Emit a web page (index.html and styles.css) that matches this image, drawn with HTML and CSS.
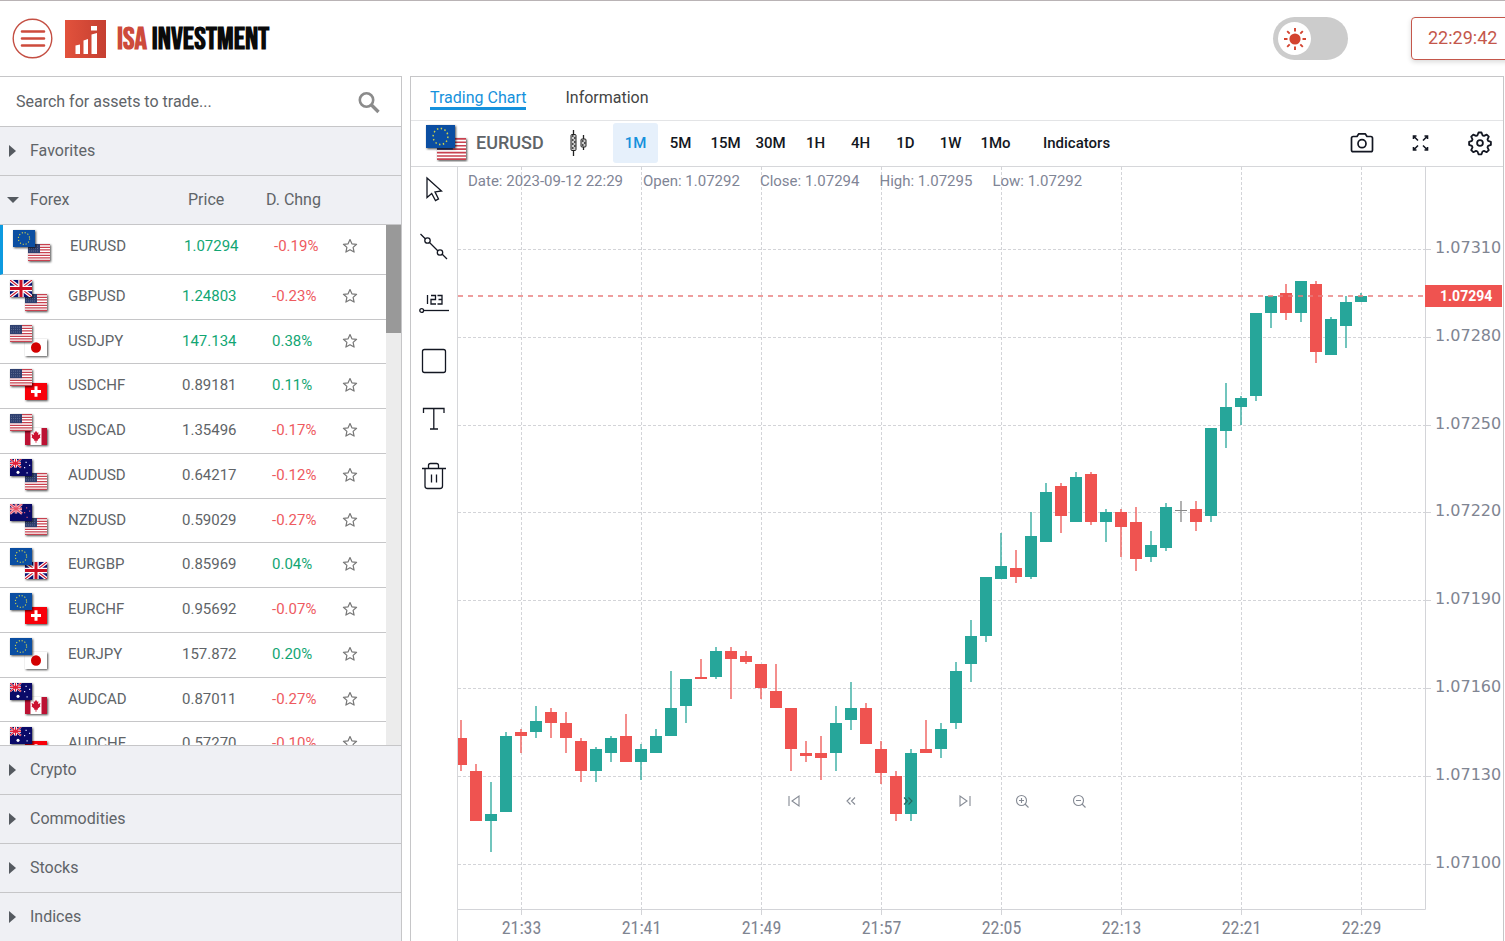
FILE: index.html
```html
<!DOCTYPE html>
<html lang="en">
<head>
<meta charset="utf-8">
<meta name="viewport" content="width=device-width, initial-scale=1">
<title>ISA Investment</title>
<link rel="stylesheet" href="styles.css">
</head>
<body>
<svg class="defs" aria-hidden="true">
  <defs>
    <symbol id="us" viewBox="0 0 22 16" preserveAspectRatio="none">
      <rect width="22" height="16" fill="#fff"/>
      <path d="M0 .6h22M0 3.1h22M0 5.6h22M0 8.1h22M0 10.6h22M0 13.1h22M0 15.4h22" stroke="#c8414f" stroke-width="1.2"/>
      <rect width="12" height="8.6" fill="#2f406f"/>
      <path d="M1 2h10M1 4.3h10M1 6.6h10" stroke="#6f7ca0" stroke-width=".7" stroke-dasharray="1 1"/>
    </symbol>
    <symbol id="eu" viewBox="0 0 22 16" preserveAspectRatio="none">
      <rect width="22" height="16" fill="#0b4ea2"/>
      <circle cx="11" cy="8" r="5.6" fill="none" stroke="#cfd24a" stroke-width="1.1" stroke-dasharray="1.1 1.83"/>
    </symbol>
    <symbol id="gb" viewBox="0 0 22 16" preserveAspectRatio="none">
      <rect width="22" height="16" fill="#0a1172"/>
      <path d="M0 0l22 16M22 0L0 16" stroke="#fff" stroke-width="3.4"/>
      <path d="M0 0l22 16M22 0L0 16" stroke="#d0142c" stroke-width="1.1"/>
      <path d="M11 0v16M0 8h22" stroke="#fff" stroke-width="5.4"/>
      <path d="M11 0v16M0 8h22" stroke="#cc1024" stroke-width="3"/>
    </symbol>
    <symbol id="jp" viewBox="0 0 22 16" preserveAspectRatio="none">
      <rect width="22" height="16" fill="#fff"/><circle cx="11" cy="8" r="5" fill="#d30000"/>
    </symbol>
    <symbol id="ch" viewBox="0 0 22 16" preserveAspectRatio="none">
      <rect width="22" height="16" fill="#f80009"/><path d="M11 3v10M6 8h10" stroke="#fff" stroke-width="3"/>
    </symbol>
    <symbol id="ca" viewBox="0 0 22 16" preserveAspectRatio="none">
      <rect width="22" height="16" fill="#fff"/><path d="M0 0h5.5v16H0zM16.500 0H22v16h-5.500z" fill="#bb1233"/>
      <path d="M11 2.500l1.200 2 1.200-.5-.3 2.600 2.400-1-.6 2.400.6.8-2.800 2.300.2 1-1.500-.2v2h-.8v-2l-1.500.2.2-1-2.800-2.300.6-.8-.6-2.400 2.400 1-.3-2.600 1.200.5z" fill="#cc1230"/>
    </symbol>
    <symbol id="au" viewBox="0 0 22 16" preserveAspectRatio="none">
      <rect width="22" height="16" fill="#0a0a68"/>
      <path d="M0 0l11 8M11 0L0 8" stroke="#fff" stroke-width="1.800"/>
      <path d="M5.500 0v8M0 4h11" stroke="#fff" stroke-width="3"/>
      <path d="M5.500 0v8M0 4h11M0 0l11 8M11 0L0 8" stroke="#e0213a" stroke-width="1.200"/>
      <circle cx="8" cy="12.500" r="1.500" fill="#fff"/>
      <path d="M15.500 2.500h1.200v1.200h-1.200zM19 5.500h1.200v1.200H19zM14 7.500h1.200v1.200H14zM16.500 12.500h1.200v1.200h-1.200z" fill="#dfe3ff"/>
    </symbol>
    <symbol id="nz" viewBox="0 0 22 16" preserveAspectRatio="none">
      <rect width="22" height="16" fill="#0a0a68"/>
      <path d="M0 0l12 9M12 0L0 9M6 0v9M0 4.500h12" stroke="#f7bcc4" stroke-width="2.600"/>
      <path d="M0 0l12 9M12 0L0 9M6 0v9M0 4.500h12" stroke="#e85064" stroke-width="1"/>
      <path d="M16 3h1.200v1.200H16zM19 6h1.200v1.200H19zM14 7.500h1.200v1.200H14zM16.500 12h1.200v1.200h-1.200z" fill="#d35a78"/>
    </symbol>
    <symbol id="star" viewBox="0 0 16 16">
      <path d="M8 1.500l1.900 4.300 4.700.5-3.500 3.100 1 4.700L8 11.700l-4.100 2.400 1-4.700L1.400 6.300l4.700-.5z" fill="none" stroke="#777" stroke-width="1.200" stroke-linejoin="round"/>
    </symbol>
  </defs>
</svg>

<header class="topbar">
  <button class="menu" aria-label="Menu">
    <svg width="41" height="41" viewBox="0 0 41 41"><circle cx="20.500" cy="20.500" r="19.300" fill="#fff" stroke="#c44f43" stroke-width="1.400"/><path d="M10 13.500h22M10 20.500h22M10 27.500h22" stroke="#cd4b3c" stroke-width="2.600" stroke-linecap="round"/></svg>
  </button>
  <a class="brand" href="#">
    <svg width="41" height="38" viewBox="0 0 41 38" aria-hidden="true">
      <defs><linearGradient id="lg"><stop offset="0" stop-color="#e2523c"/><stop offset="1" stop-color="#c53f31"/></linearGradient></defs>
      <rect width="41" height="38" fill="url(#lg)"/>
      <path d="M10.500 25.500l4.500-1v9.500h-4.500zM18.500 20.500l4.500-1.500v15h-4.500zM26.500 14.500l5.500-1.500v21h-5.500zM26 6h6v4.500h-6z" fill="#fff"/>
    </svg>
    <span class="brand-name"><span class="brand-accent">ISA</span> INVESTMENT</span>
  </a>
  <label class="theme">
    <input type="checkbox" aria-label="Dark theme">
    <span class="knob">
      <svg width="24" height="24" viewBox="0 0 24 24"><circle cx="12" cy="12" r="5.600" fill="#d3432f"/><path d="M12 1v3.500M12 19.500V23M1 12h3.500M19.500 12H23M4.200 4.200l2.500 2.500M17.300 17.300l2.500 2.500M4.200 19.800l2.500-2.500M17.300 6.700l2.500-2.500" stroke="#d3432f" stroke-width="1.900"/></svg>
    </span>
  </label>
  <time class="clock">22:29:42</time>
</header>

<div class="workspace">
  <aside class="sidebar">
    <form class="search">
      <input type="search" aria-label="Search for assets" placeholder="Search for assets to trade...">
      <button type="button" class="search-go" aria-label="Search"><svg width="24" height="24" viewBox="0 0 24 24"><circle cx="9.500" cy="10" r="6.700" fill="none" stroke="#8b8b8b" stroke-width="2.600"/><path d="M14 14.500l7.500 7.500" stroke="#8b8b8b" stroke-width="3.400"/></svg></button>
    </form>
    <button class="group"><span class="arrow"></span>Favorites</button>
    <button class="group" aria-expanded="true"><span class="arrow open"></span><span class="group-name">Forex</span><span class="head-price">Price</span><span>D. Chng</span></button>
    <div class="listing">
      <table class="assets">
        <colgroup><col class="c-flag"><col class="c-name"><col class="c-price"><col class="c-chg"><col></colgroup>
        <tbody id="assets"></tbody>
      </table>
      <div class="track"><div class="thumb"></div></div>
    </div>
    <button class="group top"><span class="arrow"></span>Crypto</button>
    <button class="group"><span class="arrow"></span>Commodities</button>
    <button class="group"><span class="arrow"></span>Stocks</button>
    <button class="group"><span class="arrow"></span>Indices</button>
  </aside>

  <main class="panel">
    <nav class="tabs"><a class="tab current" href="#chart">Trading Chart</a><a class="tab" href="#info">Information</a></nav>
    <div class="toolbar">
      <svg class="pair-flags" width="44" height="38" viewBox="0 0 44 38" aria-hidden="true"><use class="flag" href="#us" x="12" y="14" width="29" height="22"/><use class="flag" href="#eu" x="1" y="1" width="29" height="23"/></svg>
      <span class="symbol">EURUSD</span>
      <button class="chart-type" aria-label="Chart type"><svg width="20" height="28" viewBox="0 0 20 28"><path d="M5.500 1v26M15.500 6v15" stroke="#222" stroke-width="1.300"/><rect x="3" y="5.500" width="5" height="16" rx="1" fill="#ccc" stroke="#222"/><rect x="13" y="10" width="5" height="8" rx="1" fill="#ccc" stroke="#222"/><path d="M4 7h1.500M6 9h1.500M4 11h1.500M6 13h1.500M4 15h1.500M6 17h1.500M4 19h1.500M14 12h1.500M16 14h1.500M14 16h1.500" stroke="#222" stroke-width="1.500"/></svg></button>
      <div class="frames">
        <button class="frame on">1M</button><button class="frame">5M</button><button class="frame">15M</button><button class="frame">30M</button><button class="frame">1H</button><button class="frame">4H</button><button class="frame">1D</button><button class="frame">1W</button><button class="frame">1Mo</button>
      </div>
      <button class="frame indicators">Indicators</button>
      <div class="actions">
        <button aria-label="Snapshot"><svg width="26" height="26" viewBox="0 0 26 26" fill="none" stroke="#131722" stroke-width="1.700"><path d="M4.200 6.500h3.800l1.800-2.700h6.400l1.800 2.700h3.800q1.700 0 1.700 1.700v11.800q0 1.700-1.700 1.700h-17.600q-1.700 0-1.700-1.700V8.200q0-1.700 1.700-1.700z" stroke-linejoin="round"/><circle cx="13" cy="13.700" r="4"/></svg></button>
        <button aria-label="Full screen"><svg width="26" height="26" viewBox="0 0 26 26" fill="none" stroke="#131722" stroke-width="1.600"><path d="M5.500 9V6h3M16.500 6h3v3M19.500 17v3h-3M8.500 20h-3v-3M5.500 6l4.500 4.500M19.500 6L15 10.500M5.500 20l4.500-4.500M19.500 20L15 15.500"/></svg></button>
        <button aria-label="Settings"><svg width="26" height="26" viewBox="0 0 26 26" fill="none" stroke="#131722" stroke-width="1.800" stroke-linejoin="round"><circle cx="13" cy="13" r="2.900"/><path d="M11.500 2.500h3l1 2.800 1.500.6 2.700-1.300 2.100 2.100-1.300 2.700.6 1.500 2.800 1v3l-2.800 1-.6 1.500 1.300 2.700-2.100 2.100-2.700-1.300-1.500.6-1 2.800h-3l-1-2.800-1.500-.6-2.700 1.300-2.100-2.100 1.300-2.700-.6-1.500-2.800-1v-3l2.800-1 .6-1.500-1.300-2.700 2.100-2.100L9 5.900l1.500-.6z"/></svg></button>
      </div>
    </div>
    <div class="stage">
      <div class="tools">
        <button aria-label="Cursor"><svg width="30" height="30" viewBox="0 0 30 30"><path d="M8 3v19.500l4.700-4 3.800 7 3-1.600-3.500-7 6.500-.9z" class="ink"/></svg></button>
        <button aria-label="Trend line"><svg width="30" height="30" viewBox="0 0 30 30"><path d="M1.500 2l5 5M10.500 10.500l8.500 8.500M23 22l5 5" class="ink"/><circle cx="8.500" cy="8.500" r="2.700" class="ink"/><circle cx="21" cy="20.500" r="2.700" class="ink"/></svg></button>
        <button aria-label="Price label"><svg width="30" height="30" viewBox="0 0 30 30"><circle cx="2.700" cy="21.500" r="1.900" class="ink"/><path d="M4.700 21.500H30" class="ink"/><path d="M8.500 6v9M12 6.500h4.500v4H12v4.500h5M18.500 6.500H23v8.500h-4.500M19.500 10.500H23" class="ink"/></svg></button>
        <button aria-label="Rectangle"><svg width="30" height="30" viewBox="0 0 30 30"><rect x="3.500" y="3.500" width="23" height="23" rx="2" class="ink"/></svg></button>
        <button aria-label="Text"><svg width="30" height="30" viewBox="0 0 30 30"><path d="M4.500 10V5.500h20.500V10M14.800 5.500V26M11 26h8" class="ink"/></svg></button>
        <button aria-label="Delete"><svg width="30" height="30" viewBox="0 0 30 30"><path d="M3 8.500h24M6 8.500V26q0 2.500 2.500 2.500h12.500q2.500 0 2.500-2.500V8.500M9.500 8.500V5.500q0-2 2-2h6q2 0 2 2v3M12.500 14.500v8M17.500 14.500v8" class="ink"/></svg></button>
      </div>
      <div class="chart" id="chart">
        <svg id="plot" class="plot" role="img" aria-label="EURUSD one minute candles"></svg>
        <div class="legend"><span>Date: 2023-09-12 22:29</span><span>Open: 1.07292</span><span>Close: 1.07294</span><span>High: 1.07295</span><span>Low: 1.07292</span></div>
        <div class="pager">
          <button aria-label="First"><svg width="16" height="16" viewBox="0 0 16 16"><path d="M3 3v10M13 3v10L6 8z"/></svg></button>
          <button aria-label="Back"><svg width="16" height="16" viewBox="0 0 16 16"><path d="M7.500 4.500L4 8l3.500 3.500M12 4.500L8.500 8l3.500 3.500"/></svg></button>
          <button aria-label="Forward" class="dark"><svg width="16" height="16" viewBox="0 0 16 16"><path d="M4 4.500L7.500 8 4 11.500M8.500 4.500L12 8l-3.500 3.500"/></svg></button>
          <button aria-label="Last"><svg width="16" height="16" viewBox="0 0 16 16"><path d="M13 3v10M3 3v10l7-5z"/></svg></button>
          <button aria-label="Zoom in"><svg width="16" height="16" viewBox="0 0 16 16"><circle cx="7.500" cy="7.500" r="5"/><path d="M11 11l3.500 3.500M5 7.500h5M7.500 5v5"/></svg></button>
          <button aria-label="Zoom out"><svg width="16" height="16" viewBox="0 0 16 16"><circle cx="7.500" cy="7.500" r="5"/><path d="M11 11l3.500 3.500M5 7.500h5"/></svg></button>
        </div>
      </div>
    </div>
  </main>
</div>
<script src="app.js"></script>
</body>
</html>
```
FILE: styles.css
```css
* { box-sizing: border-box; }

body {
  margin: 0;
  height: 100vh;
  display: flex;
  flex-direction: column;
  overflow: hidden;
  background: #fff;
  color: #606468;
  font: 16px/20px Roboto, "Liberation Sans", sans-serif;
}

button {
  padding: 0;
  border: 0;
  background: none;
  color: inherit;
  font: inherit;
  cursor: pointer;
}

a { color: inherit; text-decoration: none; }
svg { display: block; flex: none; }
.defs { position: absolute; width: 0; height: 0; }

.topbar {
  flex: none;
  display: flex;
  align-items: center;
  height: 76px;
  padding-left: 12px;
  border-top: 1px solid #b9b3b5;
  overflow: hidden;
}
.brand { display: flex; align-items: center; gap: 11px; margin-left: 12px; }
.brand-name {
  padding-top: 2px;
  color: #0a0a0a;
  font: 700 31px/36px "Bebas Neue", "Roboto Condensed", "Liberation Sans Narrow", Roboto, sans-serif;
  white-space: nowrap;
}
.brand-accent { color: #cd4b3c; }

.theme {
  position: relative;
  flex: none;
  width: 75px;
  height: 43px;
  margin-left: auto;
  padding: 5px;
  border-radius: 22px;
  background: #ccc;
}
.theme input { position: absolute; opacity: 0; }
.knob {
  display: flex;
  align-items: center;
  justify-content: center;
  width: 33px;
  height: 33px;
  border-radius: 50%;
  background: #fff;
}
.clock {
  flex: none;
  width: 102px;
  height: 43px;
  margin: 0 -8px 0 63px;
  padding: 10px 16px;
  border: 1px solid #c4574b;
  border-radius: 4px;
  box-shadow: 0 2px 5px rgba(0, 0, 0, .15);
  color: #c4574b;
  font-size: 18px;
}

.workspace { flex: 1; min-height: 0; display: flex; gap: 8px; padding-right: 1px; }

.sidebar {
  flex: none;
  display: flex;
  flex-direction: column;
  width: 402px;
  border: solid #c6c6c8;
  border-width: 1px 1px 0 0;
}
.search { flex: none; display: flex; align-items: center; height: 50px; border-bottom: 1px solid #c6c6c8; }
.search input {
  flex: 1;
  min-width: 0;
  padding: 0 0 0 16px;
  border: 0;
  outline: 0;
  background: none;
  color: #606468;
  font: inherit;
}
.search input::placeholder { color: #606468; opacity: 1; }
.search-go { margin-right: 20px; }

.group {
  flex: none;
  display: flex;
  align-items: center;
  height: 49px;
  padding-left: 7px;
  border-bottom: 1px solid #c6c6c8;
  background: #eff0f4;
  text-align: left;
}
.group.top { border-top: 1px solid #c6c6c8; height: 50px; }
.group:last-child { border-bottom: 0; height: 48px; }
.arrow {
  width: 23px;
  height: 12px;
  background: #555a60;
  clip-path: polygon(2px 0, 9px 6px, 2px 12px);
}
.arrow.open { clip-path: polygon(0 3px, 12px 3px, 6px 9px); }
.group-name { width: 158px; }
.head-price { width: 78px; }

.listing { flex: 1; min-height: 0; display: flex; align-items: flex-start; overflow: hidden; }
.assets { flex: 1; border-collapse: separate; border-spacing: 0; table-layout: fixed; font-size: 15px; }
.c-flag { width: 68px; }
.c-name { width: 114px; }
.c-price { width: 90px; }
.c-chg { width: 70px; }
.assets td { height: 45px; padding: 11px 0 0; border-bottom: 1px solid #c6c6c8; vertical-align: top; }
.assets tr:nth-child(4n+3) td { height: 44px; }
.assets .pair { padding: 4px 0 0 9px; }
.assets .picked td { height: 50px; padding-left: 2px; }
.assets .picked .pair { padding-left: 9px; border-left: 3px solid #0d9ae0; }
.assets .picked .fav { padding-left: 0; }
.assets .fav { padding-top: 13px; }
.up { color: #12a673; }
.down { color: #ee5a5f; }
.flag { filter: drop-shadow(1px 1px 1px rgba(0, 0, 0, .7)); }
.track { align-self: stretch; width: 15px; background: #ececec; }
.thumb { height: 108px; background: #999; }

.panel {
  flex: 1;
  min-width: 0;
  display: flex;
  flex-direction: column;
  border: solid #c6c6c8;
  border-width: 1px 1px 0;
}
.tabs {
  flex: none;
  display: flex;
  align-items: flex-start;
  gap: 39px;
  height: 44px;
  padding: 11px 19px 0;
  border-bottom: 1px solid #e3e4e6;
}
.tab { color: #444; }
.current { height: 22px; color: #1591dc; border-bottom: 3px solid #1591dc; }

.toolbar {
  flex: none;
  display: flex;
  align-items: center;
  height: 46px;
  padding: 0 10px 2px 14px;
  border-bottom: 1px solid #d6d7da;
  font-size: 15px;
  font-weight: 500;
}
.symbol { width: 92px; margin-left: 7px; font-size: 18px; }
.chart-type { width: 20px; margin-right: 25px; }
.frames { display: flex; }
.frame { min-width: 45px; height: 40px; border-radius: 3px; color: #131722; }
.on { background: #e6f0fb; color: #1591dc; }
.indicators { margin-left: 25px; }
.actions { display: flex; gap: 33px; margin-left: auto; }

.stage { flex: 1; min-height: 0; display: flex; }
.tools {
  flex: none;
  display: flex;
  flex-direction: column;
  align-items: center;
  gap: 27px;
  width: 47px;
  padding-top: 8px;
  border-right: 1px solid #d6d7da;
}
.ink { fill: none; stroke: #131722; stroke-width: 1.3; }

.chart { position: relative; flex: 1; min-width: 0; }
.plot { width: 100%; height: 100%; }
.legend { position: absolute; top: 4px; left: 10px; display: flex; gap: 20px; color: #7f8596; font-size: 15px; white-space: nowrap; }
.pager {
  position: absolute;
  bottom: 132px;
  left: 0;
  right: 88px;
  display: flex;
  justify-content: center;
  gap: 41px;
}
.pager svg { fill: none; stroke: #858a94; stroke-width: 1.1; }
.pager .dark svg { stroke: #24685f; }

.grid { stroke: #d3d4d8; stroke-dasharray: 3 2; }
.tick, .axis { fill: none; stroke: #d3d4d8; }
.price-line { stroke: #e97e7e; stroke-dasharray: 5 5; stroke-width: 1.5; }
.tag { fill: #ef5350; }
.tag-text { fill: #fff; font: 700 14px Roboto, sans-serif; }
.price-text { fill: #7f8592; font: 16px "DejaVu Sans", sans-serif; }
.time-text { fill: #7f8592; font: 18px "Roboto Condensed", "Liberation Sans Narrow", Roboto, sans-serif; text-anchor: middle; }
```
FILE: app.js
```js
const assets = [
  ['eu', 'us', 'EURUSD', '1.07294', 'up', '-0.19%'],
  ['gb', 'us', 'GBPUSD', '1.24803', 'up', '-0.23%'],
  ['us', 'jp', 'USDJPY', '147.134', 'up', '0.38%'],
  ['us', 'ch', 'USDCHF', '0.89181', '', '0.11%'],
  ['us', 'ca', 'USDCAD', '1.35496', '', '-0.17%'],
  ['au', 'us', 'AUDUSD', '0.64217', '', '-0.12%'],
  ['nz', 'us', 'NZDUSD', '0.59029', '', '-0.27%'],
  ['eu', 'gb', 'EURGBP', '0.85969', '', '0.04%'],
  ['eu', 'ch', 'EURCHF', '0.95692', '', '-0.07%'],
  ['eu', 'jp', 'EURJPY', '157.872', '', '0.20%'],
  ['au', 'ca', 'AUDCAD', '0.87011', '', '-0.27%'],
  ['au', 'ch', 'AUDCHF', '0.57270', '', '-0.10%']
];

document.getElementById('assets').innerHTML = assets.map(([a, b, name, price, move, change], i) => `
  <tr${i === 0 ? ' class="picked"' : ''}>
    <td class="pair"><svg width="42" height="36" viewBox="0 0 42 36" aria-hidden="true"><use class="flag" href="#${b}" x="16" y="15" width="22" height="17"/><use class="flag" href="#${a}" x="1" y="1" width="22" height="17"/></svg></td>
    <td>${name}</td>
    <td class="${move}">${price}</td>
    <td class="${change[0] === '-' ? 'down' : 'up'}">${change}</td>
    <td class="fav"><button aria-label="Add ${name} to favorites"><svg width="16" height="16"><use href="#star"/></svg></button></td>
  </tr>`).join('');

// Each candle: direction, body top, body bottom, wick top, wick bottom.
const candles = [
  ['r', 571, 598, 553, 604], ['r', 604, 654, 597, 654], ['g', 647, 654, 615, 685], ['g', 569, 645, 565, 645],
  ['r', 565, 569, 562, 586], ['g', 554, 565, 539, 571], ['r', 545, 556, 541, 571], ['r', 556, 571, 545, 586],
  ['r', 574, 604, 571, 615], ['g', 582, 604, 580, 615], ['g', 571, 586, 569, 595], ['r', 569, 595, 547, 595],
  ['g', 582, 595, 577, 613], ['g', 569, 586, 562, 586], ['g', 541, 569, 504, 569], ['g', 512, 539, 512, 556],
  ['r', 510, 512, 492, 512], ['g', 484, 510, 480, 512], ['r', 484, 492, 480, 532], ['r', 489, 495, 484, 497],
  ['r', 497, 521, 497, 532], ['r', 524, 541, 497, 541], ['r', 541, 582, 541, 604], ['r', 586, 589, 574, 595],
  ['r', 586, 591, 569, 613], ['g', 556, 586, 539, 604], ['g', 541, 553, 515, 563], ['r', 541, 577, 536, 577],
  ['r', 582, 606, 574, 617], ['r', 609, 647, 604, 654], ['g', 586, 647, 582, 654], ['r', 582, 586, 553, 586],
  ['g', 562, 582, 556, 591], ['g', 504, 556, 495, 562], ['g', 469, 497, 453, 515], ['g', 410, 469, 410, 475],
  ['g', 399, 412, 366, 412], ['r', 401, 410, 383, 416], ['g', 369, 410, 345, 412], ['g', 325, 375, 316, 375],
  ['r', 319, 349, 316, 366], ['g', 310, 355, 305, 355], ['r', 307, 355, 305, 358], ['g', 345, 355, 342, 375],
  ['r', 345, 360, 342, 390], ['r', 355, 392, 340, 404], ['g', 378, 390, 364, 395], ['g', 340, 381, 336, 384],
  ['n', 343, 344, 334, 355], ['r', 342, 355, 334, 364], ['g', 261, 349, 261, 355], ['g', 240, 264, 216, 281],
  ['g', 231, 240, 229, 258], ['g', 146, 229, 146, 234], ['g', 129, 146, 129, 161], ['r', 126, 146, 117, 153],
  ['g', 114, 146, 114, 155], ['r', 117, 185, 114, 196], ['g', 152, 188, 150, 188], ['g', 135, 159, 129, 181],
  ['g', 129, 135, 126, 135]
];
const colors = { r: '#ef5350', g: '#26a69a', n: '#888' };
const times = ['21:33', '21:41', '21:49', '21:57', '22:05', '22:13', '22:21', '22:29'];
const prices = ['1.07310', '1.07280', '1.07250', '1.07220', '1.07190', '1.07160', '1.07130', '1.07100'];
const plot = document.getElementById('plot');

function draw() {
  const right = plot.clientWidth - 78;
  const last = right - 64;
  const bottom = plot.clientHeight - 31;
  let out = '';
  times.forEach((t, i) => {
    const x = Math.round(last - 120 * (7 - i)) + 0.5;
    out += `<path class="grid" d="M${x} 0V${bottom}"/><path class="tick" d="M${x} ${bottom}v5"/><text class="time-text" x="${x}" y="${bottom + 24}">${t}</text>`;
  });
  prices.forEach((p, i) => {
    const y = Math.round(82 + 87.8 * i) + 0.5;
    out += `<path class="grid" d="M0 ${y}H${right}"/><path class="tick" d="M${right} ${y}h6"/><text class="price-text" x="${right + 10}" y="${y + 3}">${p}</text>`;
  });
  out += `<path class="axis" d="M0 ${bottom - 0.5}H${right + 0.5}V0"/>`;
  candles.forEach(([c, top, base, high, low], i) => {
    const x = last - 15 * (candles.length - 1 - i);
    out += `<path d="M${x} ${high}V${low}" stroke="${colors[c]}" stroke-width="1.3"/><rect x="${x - 6}" y="${top}" width="12" height="${base - top}" fill="${colors[c]}"/>`;
  });
  out += `<path class="price-line" d="M0 129H${right}"/><rect class="tag" x="${right}" y="118" width="77" height="22"/><text class="tag-text" x="${right + 15}" y="134">1.07294</text>`;
  plot.innerHTML = out;
}

draw();
window.addEventListener('resize', draw);
```
